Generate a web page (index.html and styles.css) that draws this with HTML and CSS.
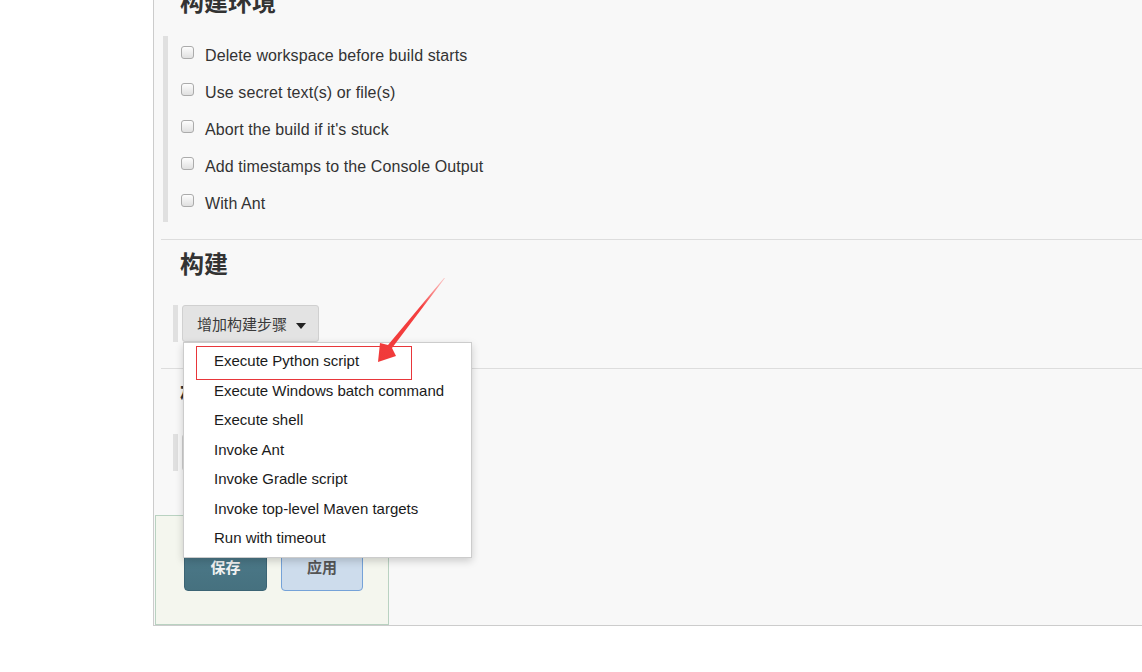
FILE: index.html
```html
<!DOCTYPE html>
<html lang="zh">
<head>
  <meta charset="UTF-8">
  <title>配置</title>
  <link rel="stylesheet" href="styles.css">
</head>
<body>
  <div class="pagina">
    <div class="contenido">
      <div class="seccion primera">
        <h2>构建环境</h2>
        <div class="bloque opciones">
          <label class="opcion"><input type="checkbox"> Delete workspace before build starts</label>
          <label class="opcion"><input type="checkbox"> Use secret text(s) or file(s)</label>
          <label class="opcion"><input type="checkbox"> Abort the build if it's stuck</label>
          <label class="opcion"><input type="checkbox"> Add timestamps to the Console Output</label>
          <label class="opcion"><input type="checkbox"> With Ant</label>
        </div>
      </div>

      <div class="seccion">
        <h2>构建</h2>
        <div class="bloque paso">
          <div class="menu-wrap">
            <button class="btn-paso">增加构建步骤 <span class="caret"></span></button>
            <ul class="menu">
              <li class="marcado">Execute Python script</li>
              <li>Execute Windows batch command</li>
              <li>Execute shell</li>
              <li>Invoke Ant</li>
              <li>Invoke Gradle script</li>
              <li>Invoke top-level Maven targets</li>
              <li>Run with timeout</li>
            </ul>
          </div>
        </div>
      </div>

      <div class="seccion">
        <h2>构建后操作</h2>
        <div class="bloque paso">
          <button class="btn-paso">增加构建后操作步骤 <span class="caret"></span></button>
        </div>
      </div>

      <div class="barra-botones">
        <button class="btn-guardar">保存</button>
        <button class="btn-aplicar">应用</button>
      </div>
    </div>
  </div>

  <svg class="flecha" width="1142" height="672" viewBox="0 0 1142 672">
    <defs>
      <linearGradient id="rojo" x1="445" y1="278" x2="380" y2="362" gradientUnits="userSpaceOnUse">
        <stop offset="0" stop-color="#ff5a5a" stop-opacity="0.3"/>
        <stop offset="0.35" stop-color="#f53f3f"/>
        <stop offset="1" stop-color="#f03a3a"/>
      </linearGradient>
    </defs>
    <polygon points="445,278 392,348 396,356 378,362 380,343 388,345 444,278" fill="url(#rojo)"/>
  </svg>
</body>
</html>
```

FILE: styles.css
```css
body {
  margin: 0;
  background: #fff;
  font-family: "Liberation Sans", Arial, "Noto Sans CJK SC", sans-serif;
  color: #333;
}

.pagina {
  margin-left: 153px;
  height: 625px;
  border-left: 1px solid #ccc;
  border-bottom: 1px solid #ccc;
  background: #f8f8f8;
  overflow: hidden;
}

.contenido {
  margin-top: -14px;
}

.seccion {
  margin-left: 7px;
  border-top: 1px solid #ddd;
  padding-top: 8px;
}

.seccion.primera {
  border-top: none;
  padding-top: 0;
  margin-bottom: 17px;
}

h2 {
  margin: 0 0 0 19px;
  font-family: "Noto Sans CJK SC", "Liberation Sans", sans-serif;
  font-size: 24px;
  line-height: 30px;
  font-weight: bold;
  color: #333;
}

.bloque {
  border-left: 5px solid #e0e0e0;
}

.opciones {
  margin: 20px 0 0 2px;
  padding: 1px 0 0 13px;
}

.opcion {
  display: flex;
  align-items: center;
  height: 37px;
  font-size: 16px;
  letter-spacing: 0.1px;
}

.opcion input {
  appearance: none;
  width: 13px;
  height: 13px;
  margin: -7px 11px 0 0;
  border: 1px solid #ababab;
  border-radius: 3px;
  background: linear-gradient(#fdfdfd, #e0e0e0);
}

.paso {
  margin: 27px 0 26px 12px;
  padding-left: 4px;
  height: 37px;
}

.seccion:last-of-type .paso {
  margin-top: 26px;
}

.menu-wrap {
  position: relative;
  display: inline-block;
}

.btn-paso {
  height: 37px;
  padding: 0 12px 0 14px;
  border: 1px solid #d0d0d0;
  border-radius: 3px;
  background: #e3e3e3;
  font-family: "Noto Sans CJK SC", sans-serif;
  font-size: 15px;
  color: #3a3a3a;
  white-space: nowrap;
}

.caret {
  display: inline-block;
  margin-left: 6px;
  border-left: 5px solid transparent;
  border-right: 5px solid transparent;
  border-top: 6px solid #222;
  vertical-align: middle;
}

.menu {
  position: absolute;
  left: 1px;
  top: 37px;
  width: 287px;
  margin: 0;
  padding: 3px 0 4px;
  list-style: none;
  background: #fff;
  border: 1px solid #ccc;
  box-shadow: 0 3px 8px rgba(0,0,0,0.18);
  z-index: 2;
}

.menu li {
  position: relative;
  height: 29.5px;
  line-height: 29.5px;
  padding-left: 30px;
  font-size: 15px;
  color: #1a1a1a;
  white-space: nowrap;
}

.menu li.marcado::after {
  content: "";
  position: absolute;
  left: 12px;
  top: 0;
  width: 214px;
  height: 32px;
  border: 1px solid #e8363a;
}

.barra-botones {
  display: flex;
  align-items: flex-start;
  gap: 14px;
  width: 234px;
  height: 110px;
  margin: 44px 0 0 1px;
  padding: 25px 0 0 28px;
  box-sizing: border-box;
  border: 1px solid #b9d2c1;
  background: #f4f6ee;
}

.btn-guardar,
.btn-aplicar {
  width: 83px;
  height: 50px;
  border-radius: 4px;
  font-family: "Noto Sans CJK SC", sans-serif;
  font-size: 15px;
  font-weight: bold;
}

.btn-guardar {
  border: 1px solid #3b6474;
  background: linear-gradient(#6a8e9c, #4b7888 30%, #46717f);
  color: #f2f2f2;
}

.btn-aplicar {
  width: 82px;
  border: 1px solid #75a2d8;
  background: #cddcec;
  color: #555;
}

.flecha {
  position: absolute;
  left: 0;
  top: 0;
  pointer-events: none;
  z-index: 3;
}
```
